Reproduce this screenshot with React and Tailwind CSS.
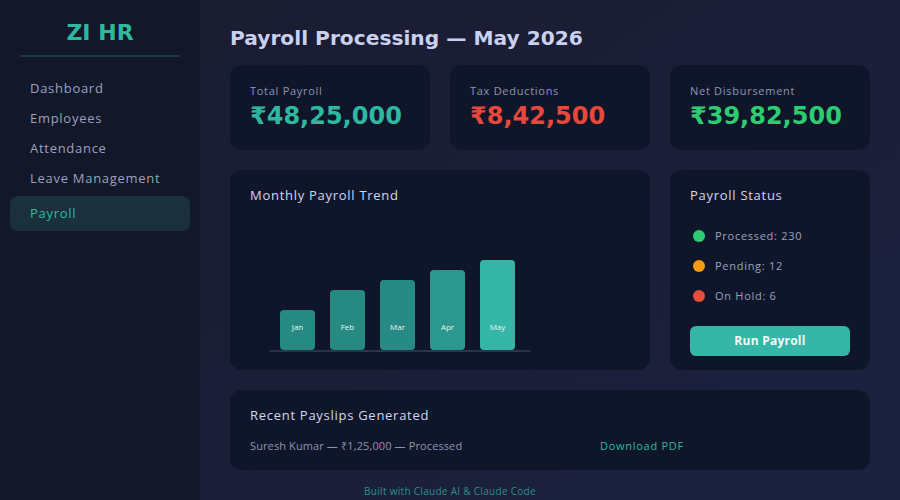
import React from 'react';

const NAV = ['Dashboard', 'Employees', 'Attendance', 'Leave Management', 'Payroll'];

const STATS = [
  { label: 'Total Payroll', value: '₹48,25,000', color: 'text-[#2eb8a0]' },
  { label: 'Tax Deductions', value: '₹8,42,500', color: 'text-[#e8483c]' },
  { label: 'Net Disbursement', value: '₹39,82,500', color: 'text-[#2ecc71]' },
];

const BARS = [
  { m: 'Jan', h: 'h-[40px]', bg: 'bg-[#268a82]' },
  { m: 'Feb', h: 'h-[60px]', bg: 'bg-[#278a82]' },
  { m: 'Mar', h: 'h-[70px]', bg: 'bg-[#288a84]' },
  { m: 'Apr', h: 'h-[80px]', bg: 'bg-[#2c978e]' },
  { m: 'May', h: 'h-[90px]', bg: 'bg-[#35b6a6]' },
];

const STATUS = [
  { label: 'Processed: 230', dot: 'bg-[#2ecc71]' },
  { label: 'Pending: 12', dot: 'bg-[#f39c12]' },
  { label: 'On Hold: 6', dot: 'bg-[#e74c3c]' },
];

const body = { fontFamily: '"Open Sans", "Noto Sans", sans-serif' };
const heading = { fontFamily: '"DejaVu Sans", sans-serif' };

export default function App() {
  return (
    <div className="flex w-[900px] h-[500px] overflow-hidden bg-[#1a1d31] tracking-[0.045em]" style={body}>
      {/* Sidebar */}
      <aside className="w-[200px] shrink-0 bg-[#12172a] px-[10px] pt-[20px]">
        <div className="mx-[10px] border-b-2 border-[#1d3a42] pb-[9px] text-center">
          <span className="text-[22px] font-bold leading-[26px] tracking-normal text-[#2eb8a0]" style={heading}>ZI HR</span>
        </div>
        <nav className="mt-[17px] flex flex-col">
          {NAV.map(item => (
            item === 'Payroll' ? (
              <div key={item} className="mt-[2px] h-[35px] rounded-lg bg-[#1a313d] px-[20px] flex items-center text-[13px] text-[#2eb8a0]">
                {item}
              </div>
            ) : (
              <div key={item} className="h-[30px] px-[20px] flex items-center text-[13px] text-[#9aa2c0]">
                {item}
              </div>
            )
          ))}
        </nav>
      </aside>

      {/* Main */}
      <main className="flex-1 bg-gradient-to-br from-[#1a1c30] to-[#1b2140] px-[30px] pt-[24px]">
        <h1 className="text-[20.2px] font-bold leading-[28px] tracking-normal text-[#c9d0f0]" style={heading}>
          Payroll Processing — May 2026
        </h1>

        <div className="mt-[13px] grid grid-cols-3 gap-[20px]">
          {STATS.map(s => (
            <div key={s.label} className="h-[85px] rounded-xl bg-[#10162a] px-[20px] pt-[19px]">
              <div className="text-[11px] leading-[14px] text-[#8c94b3]">{s.label}</div>
              <div className={`mt-[3px] text-[24px] font-bold leading-[30px] tracking-normal ${s.color}`} style={heading}>{s.value}</div>
            </div>
          ))}
        </div>

        <div className="mt-[20px] flex gap-[20px]">
          {/* Chart */}
          <div className="w-[420px] h-[200px] rounded-xl bg-[#10162a] px-[20px] pt-[16px]">
            <div className="text-[13px] leading-[18px] text-[#d0d6f0]">Monthly Payroll Trend</div>
            <div className="mt-[33px] ml-[20px] w-[260px] h-[115px] flex flex-col justify-end">
              <div className="flex items-end gap-[15px] px-[10px]">
                {BARS.map(b => (
                  <div key={b.m} className={`w-[35px] ${b.h} ${b.bg} rounded-[4px] flex items-end justify-center pb-[18px]`}>
                    <span className="text-[8px] leading-[10px] tracking-normal text-[#e8f6f4]">{b.m}</span>
                  </div>
                ))}
              </div>
              <div className="h-[2px] bg-[#2c3448]" />
            </div>
          </div>

          {/* Status */}
          <div className="w-[200px] h-[200px] rounded-xl bg-[#10162a] px-[20px] pt-[16px]">
            <div className="text-[13px] leading-[18px] text-[#d0d6f0]">Payroll Status</div>
            <div className="mt-[17px] flex flex-col">
              {STATUS.map(s => (
                <div key={s.label} className="h-[30px] flex items-center gap-[10px] pl-[3px]">
                  <span className={`w-[12px] h-[12px] rounded-full ${s.dot}`} />
                  <span className="text-[11px] text-[#9aa1bd]">{s.label}</span>
                </div>
              ))}
            </div>
            <button className="mt-[15px] w-[160px] h-[30px] rounded-md bg-[#35b6a6] text-[12px] font-bold tracking-[0.02em] text-[#f2fbfa]">
              Run Payroll
            </button>
          </div>
        </div>

        {/* Recent payslips */}
        <div className="mt-[20px] h-[80px] rounded-xl bg-[#10162a] px-[20px] pt-[16px]">
          <div className="text-[13px] leading-[18px] text-[#d0d6f0]">Recent Payslips Generated</div>
          <div className="mt-[15px] flex text-[11px] leading-[14px]">
            <span className="w-[350px] tracking-[0.01em] text-[#8c94b3]">Suresh Kumar — ₹1,25,000 — Processed</span>
            <span className="text-[#2eb8a0]">Download PDF</span>
          </div>
        </div>

        <div className="mr-[200px] mt-[15px] text-center text-[10px] leading-[12px] tracking-[0.03em] text-[#2a9088]">
          Built with Claude AI &amp; Claude Code
        </div>
      </main>
    </div>
  );
}
